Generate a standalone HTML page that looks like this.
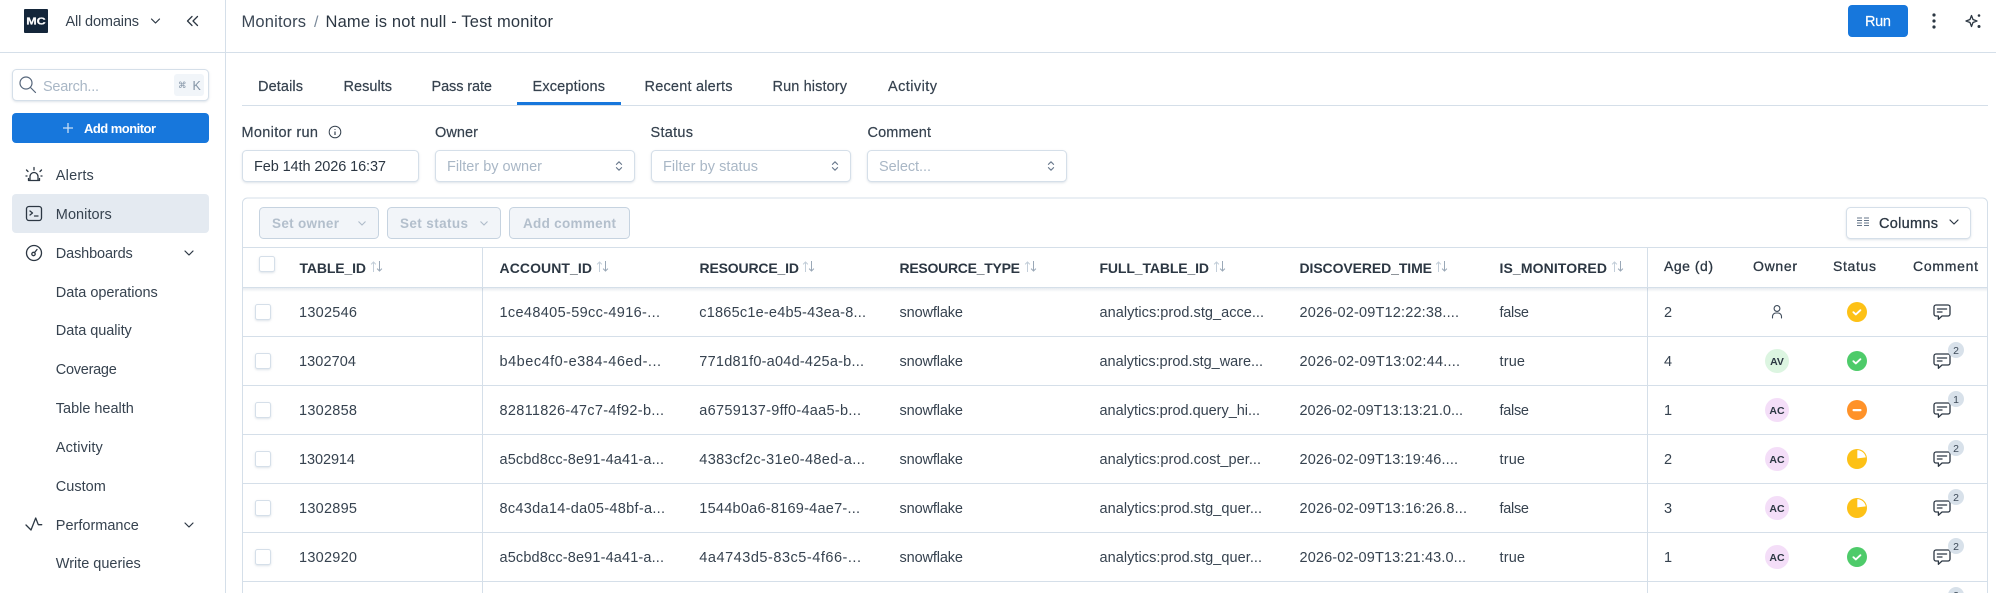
<!DOCTYPE html>
<html lang="en"><head><meta charset="utf-8"><title>Monitors</title>
<style>
html,body{margin:0;padding:0;background:#fff;width:1996px;height:593px;overflow:hidden}
svg{display:block}
text{font-family:"Liberation Sans",sans-serif;fill:#36424f;font-size:14.5px}
.m{stroke:#36424f;stroke-width:.2}
.h{font-weight:700;font-size:14px;fill:#2c3743}
.th{font-size:14px;stroke:#2c3743;stroke-width:.3;fill:#2c3743}
.p{fill:#a9b7c6}
.tb{font-weight:700;font-size:13.5px;fill:#b3bfcc}
.av{font-weight:700;font-size:10.5px;fill:#2c3743;text-anchor:middle}
.bd{font-size:10.5px;fill:#3d4a58;text-anchor:middle}
.l{stroke:#d5dfe9;stroke-width:1;fill:none}
.i{fill:none;stroke:#2c3743;stroke-width:1.3;stroke-linecap:round;stroke-linejoin:round}
.box{fill:#fff;stroke:#d5dfe9;filter:drop-shadow(0 1px 1px rgba(120,140,165,.25))}
.dis{fill:#f2f5f9;stroke:#c6d3e0}
</style></head><body>
<svg xmlns="http://www.w3.org/2000/svg" width="1996" height="593" viewBox="0 0 1996 593">
<defs>
<linearGradient id="sh" x1="0" y1="0" x2="0" y2="1"><stop offset="0" stop-color="#8fa3b8" stop-opacity=".22"/><stop offset="1" stop-color="#8fa3b8" stop-opacity="0"/></linearGradient>
<g id="sort"><path d="M3 11V1M.6 3.4 3 1l2.4 2.4" fill="none" stroke="#c3ced9" stroke-width="1"/><path d="M9 0v10M6.6 7.6 9 10l2.4-2.4" fill="none" stroke="#9aa8b7" stroke-width="1"/></g>
<g id="cm"><path class="i" d="M-6-7H6a2 2 0 0 1 2 2V2a2 2 0 0 1-2 2H0L-3.600 7.300V4H-6a2 2 0 0 1-2-2V-5a2 2 0 0 1 2-2z"/><path class="i" d="M-4.600-3H4.600M0 0H-4.600"/></g>
<g id="chk"><path d="M-3.600.2-1.200 2.400 3.400-1.800" fill="none" stroke="#fff" stroke-width="1.900" stroke-linecap="round" stroke-linejoin="round"/></g>
<g id="pie"><circle r="10" fill="#fdc116"/><path d="M.3-.6V-8.900A9 9 0 0 1 8.800-1.600z" fill="#fff"/></g>
<g id="cb"><rect x=".5" y=".5" width="15" height="15" rx="2" class="box"/></g>
<path id="ch" d="M-4-2 0 2 4-2" fill="none" stroke="#2c3743" stroke-width="1.200" stroke-linecap="round" stroke-linejoin="round"/>
<path id="sp" d="M-2.600-1.600 0-4.200 2.600-1.600M-2.600 1.600 0 4.200 2.600 1.600" fill="none" stroke="#66768a" stroke-width="1.100" stroke-linecap="round" stroke-linejoin="round"/>
</defs>

<!-- structural lines -->
<path class="l" d="M0 52.500H1996M225.500 0V593"/>

<!-- sidebar header -->
<rect x="24" y="9" width="24" height="24" rx="1" fill="#14263a"/>
<text transform="translate(26.200 24.700) scale(1.200 1)" style="font-weight:700;font-size:10.500px;fill:#fff;stroke:#fff;stroke-width:.2">MC</text>
<text x="65.500" y="26" textLength="73.500">All domains</text>
<use href="#ch" x="155.500" y="21"/>
<path class="i" d="M192 16.500 187.500 21 192 25.500M197.500 16.500 193 21 197.500 25.500"/>

<!-- search -->
<rect x="12.500" y="69.500" width="196" height="31" rx="4" class="box"/>
<circle cx="26" cy="83" r="6" fill="none" stroke="#55657a" stroke-width="1.200"/>
<path d="M30.500 87.500 35.500 92.500" stroke="#55657a" stroke-width="1.200" stroke-linecap="round"/>
<text class="p" x="43" y="91" textLength="56">Search...</text>
<rect x="174" y="74" width="30" height="22" rx="3" fill="#f1f5f9"/>
<text x="178" y="88" style="font-family:'DejaVu Sans',sans-serif;font-size:8.500px;fill:#8394a6">⌘</text>
<text x="192.500" y="90" style="font-size:12.500px;fill:#8394a6">K</text>

<!-- add monitor -->
<rect x="12" y="113" width="197" height="30" rx="4" fill="#1777dc"/>
<path d="M63 128H73M68 123V133" stroke="#c9dff6" stroke-width="1.300"/>
<text x="84" y="133" textLength="72" style="font-weight:700;font-size:13px;fill:#fff">Add monitor</text>

<!-- nav -->
<rect x="12" y="194" width="197" height="39" rx="4" fill="#e4eaf1"/>
<path class="i" d="M30 180.500V176.500A4 4 0 0 1 38 176.500V180.500M28.500 180.500H39.500V178.500M28.500 178.500V180.500M34 170V167.500M28 171.500 26.500 170M40 171.500 41.500 170M26 176H27M41 176H42" stroke-width="1.100"/>
<rect x="26.500" y="206.500" width="15" height="14" rx="2.500" class="i"/>
<path class="i" d="M30 211 32.500 213 30 215M34.500 216H38"/>
<circle cx="34" cy="253" r="7.500" class="i"/>
<path class="i" d="M35 252 37 249.500"/><circle cx="33.500" cy="254" r="1.700" class="i"/>
<path class="i" d="M26 525 31 530 35.700 518 38.300 524.700H41.700" stroke-width="1.200"/>
<text x="55.800" y="180" textLength="38">Alerts</text>
<text x="55.800" y="219" textLength="56">Monitors</text>
<text x="55.800" y="258" textLength="77">Dashboards</text>
<use href="#ch" x="189" y="253"/>
<text x="55.800" y="297" textLength="102">Data operations</text>
<text x="55.800" y="335" textLength="76">Data quality</text>
<text x="55.800" y="374" textLength="61">Coverage</text>
<text x="55.800" y="413" textLength="78">Table health</text>
<text x="55.800" y="452" textLength="47">Activity</text>
<text x="55.800" y="491" textLength="50">Custom</text>
<text x="55.800" y="530" textLength="83">Performance</text>
<use href="#ch" x="189" y="525"/>
<text x="55.800" y="568" textLength="85">Write queries</text>

<!-- top bar -->
<text x="241.500" y="27" textLength="64.500" style="font-size:16.500px;fill:#3b4755">Monitors</text>
<text x="314" y="27" style="font-size:16px;fill:#7b8a9a">/</text>
<text x="325.500" y="27" textLength="227.500" style="font-size:16.500px;fill:#2c3743">Name is not null - Test monitor</text>
<rect x="1848" y="5" width="60" height="32" rx="4" fill="#1777dc"/>
<text x="1865" y="26" textLength="26" class="m" style="fill:#fff;stroke:#fff">Run</text>
<g fill="#2c3743"><circle cx="1934" cy="15" r="1.600"/><circle cx="1934" cy="21" r="1.600"/><circle cx="1934" cy="27" r="1.600"/>
<circle cx="1979" cy="15.500" r="1.300"/><circle cx="1979" cy="26.500" r="1.500"/></g>
<path class="i" d="M1971.500 15.500 1973 19.500 1977 21 1973 22.500 1971.500 26.500 1970 22.500 1966 21 1970 19.500z" stroke-width="1.100"/>

<!-- tabs -->
<path class="l" d="M242 105.500H1988"/>
<rect x="517" y="102" width="104" height="3" fill="#1777dc"/>
<text class="m" x="258" y="91" textLength="45">Details</text>
<text class="m" x="343.500" y="91" textLength="48.500">Results</text>
<text class="m" x="431.500" y="91" textLength="60.500">Pass rate</text>
<text class="m" x="532.500" y="91" textLength="72.500">Exceptions</text>
<text class="m" x="644.500" y="91" textLength="88">Recent alerts</text>
<text class="m" x="772.500" y="91" textLength="74.500">Run history</text>
<text class="m" x="888" y="91" textLength="49">Activity</text>

<!-- filters -->
<text class="m" x="241.500" y="137" textLength="76.500">Monitor run</text>
<circle cx="335" cy="132" r="5.800" fill="none" stroke="#36424f" stroke-width="1"/>
<path d="M335 131.500V135M335 129V129.800" stroke="#36424f" stroke-width="1.200"/>
<text class="m" x="435" y="137" textLength="43">Owner</text>
<text class="m" x="650.500" y="137" textLength="42.500">Status</text>
<text class="m" x="867.500" y="137" textLength="63.500">Comment</text>
<rect x="242.500" y="150.500" width="176" height="31" rx="4" class="box"/>
<rect x="435.500" y="150.500" width="199" height="31" rx="4" class="box"/>
<rect x="651.500" y="150.500" width="199" height="31" rx="4" class="box"/>
<rect x="867.500" y="150.500" width="199" height="31" rx="4" class="box"/>
<text x="254" y="171" textLength="132" style="fill:#2c3743">Feb 14th 2026 16:37</text>
<text class="p" x="447" y="171" textLength="95">Filter by owner</text>
<text class="p" x="663" y="171" textLength="95">Filter by status</text>
<text class="p" x="879" y="171" textLength="52">Select...</text>
<use href="#sp" x="619" y="166"/><use href="#sp" x="835" y="166"/><use href="#sp" x="1051" y="166"/>

<!-- table frame -->
<path class="l" d="M242.500 593V203a5 5 0 0 1 5-5H1982.500a5 5 0 0 1 5 5V593"/>
<path class="l" d="M243 247.500H1987M243 287.500H1987M243 336.500H1987M243 385.500H1987M243 434.500H1987M243 483.500H1987M243 532.500H1987M243 581.500H1987M482.500 248V593M1647.500 248V593"/>
<rect x="243" y="288" width="1744" height="4" fill="url(#sh)"/>

<!-- toolbar -->
<rect x="259.500" y="207.500" width="119" height="31" rx="4" class="dis"/>
<rect x="387.500" y="207.500" width="113" height="31" rx="4" class="dis"/>
<rect x="509.500" y="207.500" width="120" height="31" rx="4" class="dis"/>
<text class="tb" x="272" y="228" textLength="67">Set owner</text>
<text class="tb" x="400" y="228" textLength="68">Set status</text>
<text class="tb" x="523" y="228" textLength="93">Add comment</text>
<path d="M358.500 221.500 362 225 365.500 221.500M480.500 221.500 484 225 487.500 221.500" fill="none" stroke="#aebbc9" stroke-width="1.100"/>
<rect x="1846.500" y="207.500" width="124" height="31" rx="4" class="box"/>
<path d="M1857 218H1862M1857 220.500H1862M1857 223H1862M1857 225.500H1862M1864 218H1869M1864 220.500H1869M1864 223H1869M1864 225.500H1869" stroke="#66768a" stroke-width="1"/>
<text x="1879" y="228" textLength="59" class="th" style="font-size:14.500px">Columns</text>
<use href="#ch" x="1954" y="222"/>

<!-- header row -->
<use href="#cb" x="259" y="256"/>
<text class="h" x="299.500" y="273" textLength="66.500">TABLE_ID</text><use href="#sort" x="370.500" y="261"/>
<text class="h" x="499.500" y="273" textLength="92.500">ACCOUNT_ID</text><use href="#sort" x="596.500" y="261"/>
<text class="h" x="699.500" y="273" textLength="99.500">RESOURCE_ID</text><use href="#sort" x="802.500" y="261"/>
<text class="h" x="899.500" y="273" textLength="120.500">RESOURCE_TYPE</text><use href="#sort" x="1024.500" y="261"/>
<text class="h" x="1099.500" y="273" textLength="109.500">FULL_TABLE_ID</text><use href="#sort" x="1213.500" y="261"/>
<text class="h" x="1299.500" y="273" textLength="132.500">DISCOVERED_TIME</text><use href="#sort" x="1435.500" y="261"/>
<text class="h" x="1499.500" y="273" textLength="107.500">IS_MONITORED</text><use href="#sort" x="1611.500" y="261"/>
<text class="th" x="1664" y="271" textLength="49">Age (d)</text>
<text class="th" x="1753" y="271" textLength="44">Owner</text>
<text class="th" x="1833" y="271" textLength="43">Status</text>
<text class="th" x="1913" y="271" textLength="65">Comment</text>

<!-- row 1 -->
<use href="#cb" x="255" y="304"/>
<text x="299" y="317" textLength="58">1302546</text>
<text x="499.500" y="317" textLength="160.500">1ce48405-59cc-4916-...</text>
<text x="699.300" y="317" textLength="166.700">c1865c1e-e4b5-43ea-8...</text>
<text x="899.500" y="317" textLength="63.500">snowflake</text>
<text x="1099.500" y="317" textLength="164.500">analytics:prod.stg_acce...</text>
<text x="1299.500" y="317" textLength="159.500">2026-02-09T12:22:38....</text>
<text x="1499.500" y="317" textLength="29.500">false</text>
<text x="1664" y="317">2</text>
<g transform="translate(1777 312)"><circle cy="-3.500" r="2.900" fill="none" stroke="#3f4c5b" stroke-width="1.100"/><path d="M-4.500 6V4.500A3.500 3.500 0 0 1-1 1H1A3.500 3.500 0 0 1 4.500 4.500V6" fill="none" stroke="#3f4c5b" stroke-width="1.100" stroke-linecap="round"/></g>
<circle cx="1857" cy="312" r="10" fill="#fdc116"/><use href="#chk" x="1857" y="312"/>
<use href="#cm" x="1942" y="312"/>

<!-- row 2 -->
<use href="#cb" x="255" y="353"/>
<text x="299" y="366" textLength="57">1302704</text>
<text x="499.500" y="366" textLength="161.500">b4bec4f0-e384-46ed-...</text>
<text x="699.300" y="366" textLength="164.700">771d81f0-a04d-425a-b...</text>
<text x="899.500" y="366" textLength="63.500">snowflake</text>
<text x="1099.500" y="366" textLength="163.500">analytics:prod.stg_ware...</text>
<text x="1299.500" y="366" textLength="160.500">2026-02-09T13:02:44....</text>
<text x="1499.500" y="366" textLength="25.500">true</text>
<text x="1664" y="366">4</text>
<circle cx="1777" cy="361" r="12" fill="#dcf5e1"/><text class="av" x="1777" y="365">AV</text>
<circle cx="1857" cy="361" r="10" fill="#4ecb6a"/><use href="#chk" x="1857" y="361"/>
<use href="#cm" x="1942" y="361"/>
<circle cx="1956" cy="350" r="8" fill="#d8e1ea"/><text class="bd" x="1956" y="354">2</text>

<!-- row 3 -->
<use href="#cb" x="255" y="402"/>
<text x="299" y="415" textLength="58">1302858</text>
<text x="499.500" y="415" textLength="164.500">82811826-47c7-4f92-b...</text>
<text x="699.300" y="415" textLength="161.700">a6759137-9ff0-4aa5-b...</text>
<text x="899.500" y="415" textLength="63.500">snowflake</text>
<text x="1099.500" y="415" textLength="160.500">analytics:prod.query_hi...</text>
<text x="1299.500" y="415" textLength="163.500">2026-02-09T13:13:21.0...</text>
<text x="1499.500" y="415" textLength="29.500">false</text>
<text x="1664" y="415">1</text>
<circle cx="1777" cy="410" r="12" fill="#f4def8"/><text class="av" x="1777" y="414">AC</text>
<circle cx="1857" cy="410" r="10" fill="#ff9229"/><rect x="1852.500" y="409" width="9" height="2.200" rx="1" fill="#fff"/>
<use href="#cm" x="1942" y="410"/>
<circle cx="1956" cy="399" r="8" fill="#d8e1ea"/><text class="bd" x="1956" y="403">1</text>

<!-- row 4 -->
<use href="#cb" x="255" y="451"/>
<text x="299" y="464" textLength="56">1302914</text>
<text x="499.500" y="464" textLength="164.500">a5cbd8cc-8e91-4a41-a...</text>
<text x="699.300" y="464" textLength="165.700">4383cf2c-31e0-48ed-a...</text>
<text x="899.500" y="464" textLength="63.500">snowflake</text>
<text x="1099.500" y="464" textLength="161.500">analytics:prod.cost_per...</text>
<text x="1299.500" y="464" textLength="158.500">2026-02-09T13:19:46....</text>
<text x="1499.500" y="464" textLength="25.500">true</text>
<text x="1664" y="464">2</text>
<circle cx="1777" cy="459" r="12" fill="#f4def8"/><text class="av" x="1777" y="463">AC</text>
<use href="#pie" x="1857" y="459"/>
<use href="#cm" x="1942" y="459"/>
<circle cx="1956" cy="448" r="8" fill="#d8e1ea"/><text class="bd" x="1956" y="452">2</text>

<!-- row 5 -->
<use href="#cb" x="255" y="500"/>
<text x="299" y="513" textLength="58">1302895</text>
<text x="499.500" y="513" textLength="165.500">8c43da14-da05-48bf-a...</text>
<text x="699.300" y="513" textLength="160.700">1544b0a6-8169-4ae7-...</text>
<text x="899.500" y="513" textLength="63.500">snowflake</text>
<text x="1099.500" y="513" textLength="162.500">analytics:prod.stg_quer...</text>
<text x="1299.500" y="513" textLength="167.500">2026-02-09T13:16:26.8...</text>
<text x="1499.500" y="513" textLength="29.500">false</text>
<text x="1664" y="513">3</text>
<circle cx="1777" cy="508" r="12" fill="#f4def8"/><text class="av" x="1777" y="512">AC</text>
<use href="#pie" x="1857" y="508"/>
<use href="#cm" x="1942" y="508"/>
<circle cx="1956" cy="497" r="8" fill="#d8e1ea"/><text class="bd" x="1956" y="501">2</text>

<!-- row 6 -->
<use href="#cb" x="255" y="549"/>
<text x="299" y="562" textLength="58">1302920</text>
<text x="499.500" y="562" textLength="164.500">a5cbd8cc-8e91-4a41-a...</text>
<text x="699.300" y="562" textLength="161.700">4a4743d5-83c5-4f66-...</text>
<text x="899.500" y="562" textLength="63.500">snowflake</text>
<text x="1099.500" y="562" textLength="162.500">analytics:prod.stg_quer...</text>
<text x="1299.500" y="562" textLength="166.500">2026-02-09T13:21:43.0...</text>
<text x="1499.500" y="562" textLength="25.500">true</text>
<text x="1664" y="562">1</text>
<circle cx="1777" cy="557" r="12" fill="#f4def8"/><text class="av" x="1777" y="561">AC</text>
<circle cx="1857" cy="557" r="10" fill="#4ecb6a"/><use href="#chk" x="1857" y="557"/>
<use href="#cm" x="1942" y="557"/>
<circle cx="1956" cy="546" r="8" fill="#d8e1ea"/><text class="bd" x="1956" y="550">2</text>

<!-- row 7 (clipped) -->
<circle cx="1956" cy="595" r="8" fill="#d8e1ea"/><text class="bd" x="1956" y="599">2</text>
</svg>
</body></html>
